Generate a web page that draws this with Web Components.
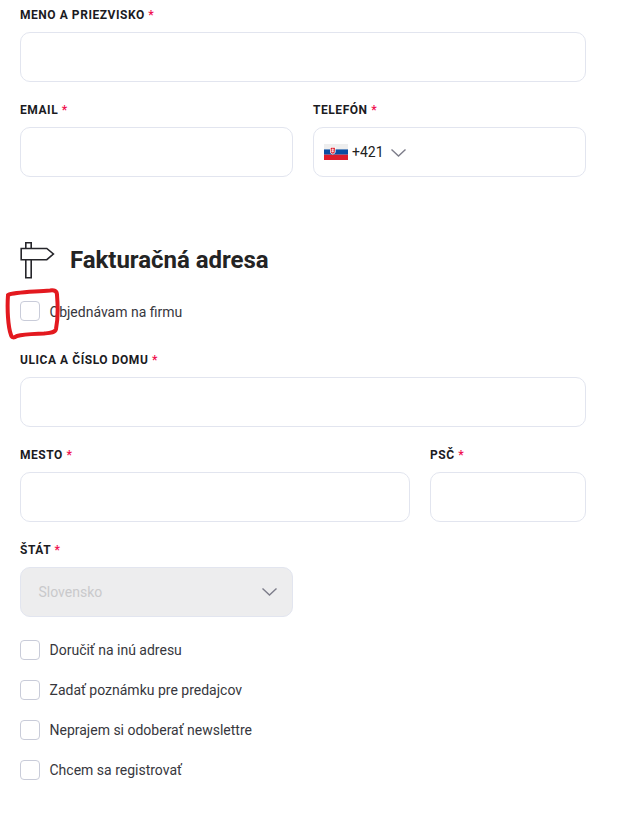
<!DOCTYPE html>
<html lang="sk">
<head>
<meta charset="utf-8">
<title>Fakturačná adresa</title>
<style>
  html, body { margin: 0; background: #fff; }
  body { font-family: Roboto, "Liberation Sans", sans-serif; color: #212121; }
</style>
</head>
<body>
<checkout-form>
  <form-row>
    <form-field label="Meno a priezvisko"></form-field>
  </form-row>
  <form-row columns="1fr 1fr">
    <form-field label="Email"></form-field>
    <form-field label="Telefón"><phone-prefix></phone-prefix></form-field>
  </form-row>
  <section-title>Fakturačná adresa</section-title>
  <check-option class="company">Objednávam na firmu<scribble-mark></scribble-mark></check-option>
  <form-row>
    <form-field label="Ulica a číslo domu"></form-field>
  </form-row>
  <form-row columns="390px 156px">
    <form-field label="Mesto"></form-field>
    <form-field label="PSČ"></form-field>
  </form-row>
  <form-row columns="1fr 1fr">
    <form-field label="Štát" disabled><select-value>Slovensko</select-value></form-field>
  </form-row>
  <check-list>
    <check-option>Doručiť na inú adresu</check-option>
    <check-option>Zadať poznámku pre predajcov</check-option>
    <check-option>Neprajem si odoberať newslettre</check-option>
    <check-option>Chcem sa registrovať</check-option>
  </check-list>
</checkout-form>

<script>
const chevron = /* html */ `
  <svg width="15" height="8" viewBox="0 0 15 8" fill="none" stroke="#7d7d8a" stroke-width="1.4">
    <path d="M.5.5l7 6.500 7-6.500"/>
  </svg>`;

class CheckoutForm extends HTMLElement {
  constructor() {
    super();
    this.attachShadow({ mode: 'open' });
    this.shadowRoot.innerHTML = /* html */ `
    <style>
      :host { display: block; position: relative; box-sizing: border-box; width: 618px; height: 815px; padding: 5px 32px 0 20px; }
    </style>
    <slot></slot>`;
  }
}

class FormRow extends HTMLElement {
  constructor() {
    super();
    this.attachShadow({ mode: 'open' });
    const columns = this.getAttribute('columns') || '1fr';
    this.shadowRoot.innerHTML = /* html */ `
    <style>
      :host { display: grid; grid-template-columns: ${columns}; column-gap: 20px; margin-bottom: 18px; }
    </style>
    <slot></slot>`;
  }
}

class FormField extends HTMLElement {
  constructor() {
    super();
    this.attachShadow({ mode: 'open' });
    const label = this.getAttribute('label');
    this.shadowRoot.innerHTML = /* html */ `
    <style>
      :host { display: block; min-width: 0; }
      label {
        display: block;
        height: 18px;
        margin-bottom: 9px;
        font: 700 12px/20px Roboto, sans-serif;
        letter-spacing: 0.55px;
        text-transform: uppercase;
        color: #1b1b1f;
      }
      label span { color: #f0114f; }
      .box {
        display: flex;
        align-items: center;
        box-sizing: border-box;
        height: 50px;
        background: #fff;
        border: 1px solid #e2e5ef;
        border-radius: 10px;
      }
      :host([disabled]) .box { background: #ededee; }
    </style>
    <label>${label} <span>*</span></label>
    <div class="box"><slot></slot></div>`;
  }
}

class PhonePrefix extends HTMLElement {
  constructor() {
    super();
    this.attachShadow({ mode: 'open' });
    this.shadowRoot.innerHTML = /* html */ `
    <style>
      :host { display: flex; align-items: center; padding-left: 10px; font: 400 14px Roboto, sans-serif; color: #212121; }
      .flag { display: block; margin-right: 4px; }
      .num { margin-right: 7px; }
      .arrow { display: block; margin-top: 2px; line-height: 0; }
    </style>
    <svg class="flag" width="24" height="16" viewBox="0 0 24 16">
      <rect width="24" height="5.4" fill="#eeeeee"/>
      <rect y="5.4" width="24" height="5.3" fill="#0b4ea2"/>
      <rect y="10.7" width="24" height="5.3" fill="#dd1c2b"/>
      <path d="M6 3h5.600v4.800c0 1.500-1.500 2.200-2.800 2.800C7.500 10 6 9.300 6 7.800z" fill="#fff"/>
      <path d="M6.700 3.700h4.200v4c0 1-1.100 1.600-2.100 2.100-1-.5-2.100-1.100-2.100-2.100z" fill="#dd1c2b"/>
      <path d="M8.400 4.400h.8v1h1v.7h-1v.6h1.200v.7H9.200v1h-.8v-1H7.200v-.7h1.200v-.6h-1v-.7h1z" fill="#fff"/>
    </svg>
    <span class="num">+421</span>
    <span class="arrow">${chevron}</span>`;
  }
}

class SelectValue extends HTMLElement {
  constructor() {
    super();
    this.attachShadow({ mode: 'open' });
    this.shadowRoot.innerHTML = /* html */ `
    <style>
      :host { display: flex; flex: 1; align-items: center; justify-content: space-between; padding: 0 15px 0 17.5px; font: 400 14px Roboto, sans-serif; color: #c9c9cb; }
      svg { display: block; }
    </style>
    <slot></slot>${chevron}`;
  }
}

class SectionTitle extends HTMLElement {
  constructor() {
    super();
    this.attachShadow({ mode: 'open' });
    this.shadowRoot.innerHTML = /* html */ `
    <style>
      :host { display: flex; align-items: center; gap: 15px; height: 38px; margin: 64px 0 22px; }
      svg { display: block; flex: none; }
      h2 { margin: 0; font: 700 24px/38px Roboto, sans-serif; color: #242424; letter-spacing: -0.03px; }
    </style>
    <svg width="35" height="38" viewBox="0 0 35 38" fill="#fff" stroke="#26262b" stroke-width="1.6">
      <path d="M5.800 1.800h5.400v35h-5.400z"/>
      <path d="M1.200 7.500h25.600l6.600 5.500-6.600 5.700H1.200z"/>
    </svg>
    <h2><slot></slot></h2>`;
  }
}

class CheckOption extends HTMLElement {
  constructor() {
    super();
    this.attachShadow({ mode: 'open' });
    this.shadowRoot.innerHTML = /* html */ `
    <style>
      :host { display: flex; align-items: center; gap: 9.5px; height: 20px; font: 400 14px/20px Roboto, sans-serif; color: #37373d; position: relative; }
      :host(.company) { margin-bottom: 29px; }
      :host(.company) .text { padding-top: 2px; }
      .tick { box-sizing: border-box; width: 20px; height: 20px; flex: none; background: #fff; border: 1px solid #c9ccd9; border-radius: 4px; }
    </style>
    <span class="tick"></span>
    <span class="text"><slot></slot></span>`;
  }
}

class CheckList extends HTMLElement {
  constructor() {
    super();
    this.attachShadow({ mode: 'open' });
    this.shadowRoot.innerHTML = /* html */ `
    <style>
      :host { display: flex; flex-direction: column; gap: 20px; margin-top: 23px; }
    </style>
    <slot></slot>`;
  }
}

// the red hand-drawn mark that lies over the first checkbox
class ScribbleMark extends HTMLElement {
  constructor() {
    super();
    this.attachShadow({ mode: 'open' });
    this.shadowRoot.innerHTML = /* html */ `
    <style>
      :host { position: absolute; left: -20px; top: -14px; width: 60px; height: 56px; pointer-events: none; }
      svg { display: block; }
    </style>
    <svg width="60" height="56" viewBox="0 0 60 56" fill="none" stroke="#e3191f" stroke-width="4" stroke-linecap="round" stroke-linejoin="round">
      <path d="M8 8C14 5 32 5 50 3.500C54 3 57 3.500 57 8C58 20 58 32 56 42C55 46 50 46 44 46.500C34 47 24 47 17 49C14 51 12 51 11 48C8 40 7 22 8 8"/>
    </svg>`;
  }
}

customElements.define('checkout-form', CheckoutForm);
customElements.define('form-row', FormRow);
customElements.define('form-field', FormField);
customElements.define('phone-prefix', PhonePrefix);
customElements.define('select-value', SelectValue);
customElements.define('section-title', SectionTitle);
customElements.define('check-option', CheckOption);
customElements.define('check-list', CheckList);
customElements.define('scribble-mark', ScribbleMark);
</script>
</body>
</html>
